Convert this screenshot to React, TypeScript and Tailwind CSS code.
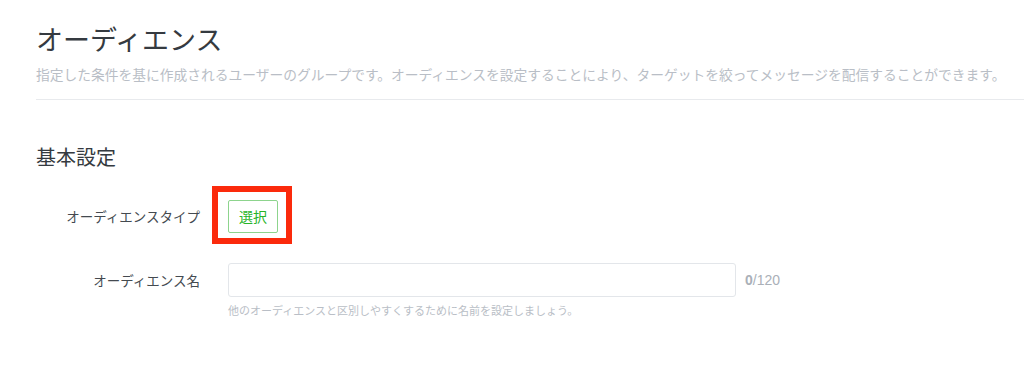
const FONT = '"Noto Sans CJK JP", "Noto Sans", sans-serif';

export default function App() {
  return (
    <div className="min-h-screen w-full bg-white pl-[36px] pt-[19px]" style={{ fontFamily: FONT }}>
      <h1 className="text-[27px] leading-[40px] font-normal text-[#353a40]">オーディエンス</h1>
      <p className="mt-[5px] text-[13.75px] leading-[20px] text-[#b9bec6] whitespace-nowrap">
        指定した条件を基に作成されるユーザーのグループです。オーディエンスを設定することにより、ターゲットを絞ってメッセージを配信することができます。
      </p>
      <div className="mt-[15px] border-t border-[#e8eaed]" />

      <h2 className="mt-[43px] text-[20px] leading-[28px] font-normal text-[#353a40]">基本設定</h2>

      <div className="mt-[29px] flex items-center">
        <div className="w-[164px] text-right text-[13.5px] text-[#444a50]">オーディエンスタイプ</div>
        <div className="relative ml-[28px]">
          <button className="h-[33px] w-[50px] rounded-[2px] border border-[#8dd48d] bg-white text-[14px] text-[#28b428]">
            選択
          </button>
          <div className="pointer-events-none absolute -left-[16px] -top-[14px] -right-[14px] -bottom-[11px] border-[6px] border-[#fb2a0c]" />
        </div>
      </div>

      <div className="mt-[30px] flex items-center">
        <div className="w-[164px] text-right text-[13.5px] text-[#444a50]">オーディエンス名</div>
        <input
          className="ml-[28px] h-[34px] w-[508px] rounded-[3px] border border-[#e3e6ea] bg-white px-3 text-[13px] outline-none"
          type="text"
        />
        <div className="ml-[9px] text-[14px] text-[#aab0b8]" style={{ fontFamily: '"Liberation Sans", sans-serif' }}>
          <span className="font-bold">0</span>/120
        </div>
      </div>
      <p className="ml-[192px] mt-[5px] text-[11px] leading-[16px] text-[#b9bec6]">
        他のオーディエンスと区別しやすくするために名前を設定しましょう。
      </p>
    </div>
  );
}
